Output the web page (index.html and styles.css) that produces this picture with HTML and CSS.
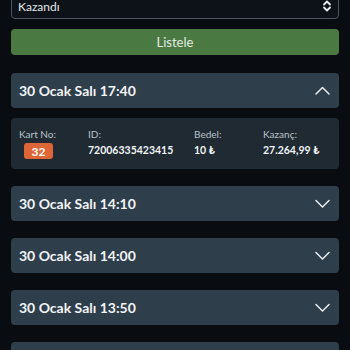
FILE: index.html
```html
<!DOCTYPE html>
<html lang="tr">
<head>
<meta charset="utf-8">
<link rel="stylesheet" href="styles.css">
</head>
<body>
<div class="page">
  <div class="select">
    <span>Kazandı</span>
    <svg class="updown" width="10" height="12" viewBox="0 0 10 12"><path d="M2 4.5 L5 1.5 L8 4.5 M2 7.5 L5 10.5 L8 7.5" fill="none" stroke="#e8ecef" stroke-width="1.8" stroke-linecap="round" stroke-linejoin="round"/></svg>
  </div>
  <button class="btn">Listele</button>

  <div class="card open">
    <div class="head">
      <span class="title">30 Ocak Salı 17:40</span>
      <svg class="chev" width="15" height="9" viewBox="0 0 15 9"><path d="M1 8 L7.5 1.5 L14 8" fill="none" stroke="#e8ecef" stroke-width="1.5" stroke-linecap="round" stroke-linejoin="round"/></svg>
    </div>
    <div class="detail">
      <div class="col c1"><span class="lbl">Kart No:</span><span class="badge">32</span></div>
      <div class="col c2"><span class="lbl">ID:</span><span class="val">72006335423415</span></div>
      <div class="col c3"><span class="lbl">Bedel:</span><span class="val">10 ₺</span></div>
      <div class="col c4"><span class="lbl">Kazanç:</span><span class="val">27.264,99 ₺</span></div>
    </div>
  </div>

  <div class="card">
    <div class="head">
      <span class="title">30 Ocak Salı 14:10</span>
      <svg class="chev" width="15" height="9" viewBox="0 0 15 9"><path d="M1 1.5 L7.5 8 L14 1.5" fill="none" stroke="#e8ecef" stroke-width="1.5" stroke-linecap="round" stroke-linejoin="round"/></svg>
    </div>
  </div>
  <div class="card">
    <div class="head">
      <span class="title">30 Ocak Salı 14:00</span>
      <svg class="chev" width="15" height="9" viewBox="0 0 15 9"><path d="M1 1.5 L7.5 8 L14 1.5" fill="none" stroke="#e8ecef" stroke-width="1.5" stroke-linecap="round" stroke-linejoin="round"/></svg>
    </div>
  </div>
  <div class="card">
    <div class="head">
      <span class="title">30 Ocak Salı 13:50</span>
      <svg class="chev" width="15" height="9" viewBox="0 0 15 9"><path d="M1 1.5 L7.5 8 L14 1.5" fill="none" stroke="#e8ecef" stroke-width="1.5" stroke-linecap="round" stroke-linejoin="round"/></svg>
    </div>
  </div>
  <div class="card">
    <div class="head"></div>
  </div>
</div>
</body>
</html>
```
FILE: styles.css
```css
html, body {
  margin: 0;
  padding: 0;
  background: #090d12;
  overflow: hidden;
}
body {
  font-family: Lato, "Noto Sans", sans-serif;
  color: #e8ecef;
}
.page {
  padding: 0 11px;
  margin-top: -8px;
}
.select {
  height: 27px;
  box-sizing: border-box;
  border: 1px solid #4b5662;
  border-radius: 4px;
  background: #0c1217;
  display: flex;
  align-items: center;
  justify-content: space-between;
  padding: 0 6px 0 6px;
  font-size: 12px;
  color: #e4e8ec;
}
.select span {
  padding-top: 1px;
}
.btn {
  display: block;
  width: 100%;
  height: 26px;
  margin-top: 10px;
  border: none;
  border-radius: 4px;
  background: #4a7a41;
  color: #e4ebe2;
  font-family: Lato, "Noto Sans", sans-serif;
  font-size: 13px;
  padding: 0;
}
.card {
  margin-top: 17px;
}
.card.open {
  margin-top: 18px;
}
.head {
  height: 35px;
  background: #2e3e4b;
  border-radius: 4px;
  display: flex;
  align-items: center;
  justify-content: space-between;
  padding: 0 9px 0 8px;
}
.title {
  font-weight: 700;
  font-size: 14px;
  color: #f2f4f6;
}
.chev {
  display: block;
}
.detail {
  margin-top: 10px;
  height: 51px;
  box-sizing: border-box;
  background: #1f2a33;
  border-radius: 4px;
  display: grid;
  grid-template-columns: 69px 106px 69px 1fr;
  padding: 9px 0 0 8px;
}
.col {
  display: flex;
  flex-direction: column;
  align-items: flex-start;
}
.lbl {
  font-size: 10px;
  color: #b9c2ca;
  line-height: 15px;
}
.val {
  font-size: 10.5px;
  font-weight: 700;
  color: #f2f4f6;
  line-height: 15px;
  margin-top: 1px;
}
.badge {
  margin-top: 1px;
  margin-left: 5px;
  width: 29px;
  height: 16px;
  border-radius: 3px;
  background: #de6535;
  color: #fff;
  font-weight: 700;
  font-size: 12px;
  display: flex;
  align-items: center;
  justify-content: center;
}
```
